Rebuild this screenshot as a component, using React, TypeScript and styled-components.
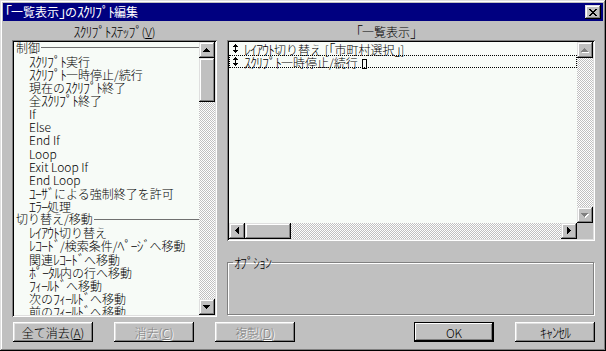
import React from 'react';
import styled, { createGlobalStyle, css } from 'styled-components';

const GlobalStyle = createGlobalStyle`
  html, body { margin: 0; padding: 0; background: #c0c0c0; }
  body {
    font-family: "Noto Sans CJK JP", "Noto Sans", sans-serif;
    font-size: 12px;
    font-weight: 300;
    color: #000;
  }
  * { box-sizing: border-box; }
`;

const raised = css`
  background: #c0c0c0;
  box-shadow: inset -1px -1px #000, inset 1px 1px #dfdfdf, inset -2px -2px #808080, inset 2px 2px #fff;
`;

const sunken = css`
  background: #f7fbf7;
  box-shadow: inset 1px 1px #808080, inset -1px -1px #fff, inset 2px 2px #000, inset -2px -2px #dfdfdf;
  padding: 2px;
`;

const checker = css`
  background-color: #fff;
  background-image: repeating-conic-gradient(#c0c0c0 0 25%, #fff 0 50%);
  background-size: 2px 2px;
`;

const HalfKanaRun = styled.span`
  font-size: 14px;
  letter-spacing: -1px;
  line-height: 1;
`;

/* Half-width katakana in Noto are drawn small; enlarge them to the bitmap look while keeping a 6px advance. */
function JText({ children }: { children: string }) {
  const parts = children.split(/([\uFF61-\uFF9F]+)/);
  return (
    <>
      {parts.map((p, i) =>
        /^[\uFF61-\uFF9F]+$/.test(p) ? <HalfKanaRun key={i}>{p}</HalfKanaRun> : <React.Fragment key={i}>{p}</React.Fragment>
      )}
    </>
  );
}

const Window = styled.div`
  width: 606px;
  height: 351px;
  padding: 3px;
  display: flex;
  flex-direction: column;
  background: #c0c0c0;
  box-shadow: inset -1px -1px #000, inset 1px 1px #dfdfdf, inset -2px -2px #808080, inset 2px 2px #fff;
`;

const TitleBar = styled.div`
  height: 18px;
  flex: none;
  display: flex;
  align-items: center;
  justify-content: space-between;
  background: #000080;
  color: #fff;
  padding: 0 2px;
  line-height: 18px;
`;

const TitleText = styled.span`
  white-space: nowrap;
  font-weight: 400;
`;

const CloseButton = styled.div`
  ${raised};
  width: 16px;
  height: 14px;
  display: flex;
  align-items: center;
  justify-content: center;
`;

const Body = styled.div`
  flex: 1;
  display: flex;
  flex-direction: column;
  padding: 3px 8px 6px 9px;
`;

const Main = styled.div`
  display: flex;
  gap: 10px;
`;

const LeftColumn = styled.div`
  width: 205px;
  display: flex;
  flex-direction: column;
`;

const RightColumn = styled.div`
  flex: 1;
  display: flex;
  flex-direction: column;
`;

const ColumnLabel = styled.div<{ $shift?: number }>`
  height: 16px;
  line-height: 16px;
  text-align: center;
  white-space: nowrap;
  padding-right: ${(p) => p.$shift ?? 0}px;
`;

const StepList = styled.div`
  ${sunken};
  height: 277px;
  display: flex;
`;

const StepItems = styled.div`
  flex: 1;
  overflow: hidden;
  margin-top: -1px;
`;

const StepRow = styled.div<{ $header?: boolean }>`
  height: 13.2px;
  line-height: 13.2px;
  display: flex;
  align-items: center;
  padding-left: ${(p) => (p.$header ? 2 : 15)}px;
  white-space: nowrap;
`;

const HeaderRule = styled.span`
  flex: 1;
  height: 1px;
  background: #707070;
  margin-left: 1px;
`;

const VScroll = styled.div`
  ${checker};
  width: 16px;
  flex: none;
  display: flex;
  flex-direction: column;
`;

const HScroll = styled.div`
  ${checker};
  height: 16px;
  display: flex;
`;

const ScrollButton = styled.div`
  ${raised};
  width: 16px;
  height: 16px;
  flex: none;
  display: flex;
  align-items: center;
  justify-content: center;
`;

const Thumb = styled.div<{ $size: number; $horizontal?: boolean }>`
  ${raised};
  flex: none;
  width: ${(p) => (p.$horizontal ? p.$size : 16)}px;
  height: ${(p) => (p.$horizontal ? 16 : p.$size)}px;
`;

const Corner = styled.div`
  background: #c0c0c0;
`;

const ScriptList = styled.div`
  ${sunken};
  height: 201px;
  display: grid;
  grid-template-columns: 1fr 16px;
  grid-template-rows: 1fr 16px;
`;

const ScriptItems = styled.div`
  overflow: hidden;
`;

const ScriptRow = styled.div<{ $focused?: boolean }>`
  height: 13px;
  line-height: 13px;
  display: flex;
  align-items: center;
  gap: 6px;
  padding-left: 4px;
  white-space: nowrap;
  ${(p) =>
    p.$focused &&
    css`
      outline: 1px dotted #000;
      outline-offset: -1px;
    `}
`;

const Tofu = styled.span`
  display: inline-block;
  width: 5px;
  height: 10px;
  border: 1px solid #000;
  margin-left: 4px;
  vertical-align: -1px;
`;

const OptionsGroup = styled.fieldset`
  margin: 14px 1px 0 0;
  padding: 0;
  height: 60px;
  min-width: 0;
  border: 1px solid #808080;
  box-shadow: inset 1px 1px #fff, 1px 1px #fff;
`;

const OptionsLegend = styled.legend`
  margin-left: 5px;
  padding: 0 1px;
  line-height: 14px;
  font-size: 12px;
`;

const ButtonRow = styled.div`
  display: flex;
  gap: 21px;
  margin-top: 5px;
  padding-left: 1px;
`;

const Spacer = styled.div`
  flex: 1;
`;

const Button = styled.button<{ $default?: boolean }>`
  width: 80px;
  height: 20px;
  padding: 0;
  font: inherit;
  color: #000;
  background: #c0c0c0;
  border: none;
  box-shadow: inset -1px -1px #000, inset 1px 1px #fff, inset -2px -2px #808080, inset 2px 2px #dfdfdf;
  ${(p) =>
    p.$default &&
    css`
      border: 1px solid #000;
      box-shadow: inset -1px -1px #000, inset 1px 1px #fff, inset -2px -2px #808080;
    `}
  &:disabled {
    color: #808080;
    text-shadow: 1px 1px #fff;
  }
`;

type Dir = 'up' | 'down' | 'left' | 'right';

function Arrow({ dir, disabled }: { dir: Dir; disabled?: boolean }) {
  const vertical = dir === 'up' || dir === 'down';
  const rects: { x: number; y: number; w: number; h: number }[] = [];
  for (let i = 0; i < 4; i++) {
    if (dir === 'up') rects.push({ x: 3 - i, y: i, w: 2 * i + 1, h: 1 });
    if (dir === 'down') rects.push({ x: i, y: i, w: 7 - 2 * i, h: 1 });
    if (dir === 'left') rects.push({ x: i, y: 3 - i, w: 1, h: 2 * i + 1 });
    if (dir === 'right') rects.push({ x: i, y: i, w: 1, h: 7 - 2 * i });
  }
  const w = vertical ? 7 : 4;
  const h = vertical ? 4 : 7;
  return (
    <svg width={w + 1} height={h + 1} viewBox={`0 0 ${w + 1} ${h + 1}`} shapeRendering="crispEdges">
      {disabled &&
        rects.map((r, i) => <rect key={`s${i}`} x={r.x + 1} y={r.y + 1} width={r.w} height={r.h} fill="#fff" />)}
      {rects.map((r, i) => (
        <rect key={i} x={r.x} y={r.y} width={r.w} height={r.h} fill={disabled ? '#808080' : '#000'} />
      ))}
    </svg>
  );
}

function CloseGlyph() {
  const rows = ['11000011', '01100110', '00111100', '00011000', '00111100', '01100110', '11000011'];
  return (
    <svg width="8" height="7" viewBox="0 0 8 7" shapeRendering="crispEdges">
      {rows.flatMap((r, y) =>
        r.split('').map((c, x) => (c === '1' ? <rect key={`${x}-${y}`} x={x} y={y} width="1" height="1" fill="#000" /> : null))
      )}
    </svg>
  );
}

function MoveIcon() {
  return (
    <svg width="5" height="9" viewBox="0 0 5 9" shapeRendering="crispEdges">
      <rect x="2" y="0" width="1" height="1" />
      <rect x="1" y="1" width="3" height="1" />
      <rect x="0" y="2" width="5" height="1" />
      <rect x="2" y="3" width="1" height="3" />
      <rect x="0" y="6" width="5" height="1" />
      <rect x="1" y="7" width="3" height="1" />
      <rect x="2" y="8" width="1" height="1" />
    </svg>
  );
}

type Step = { text: string; header?: boolean };

const steps: Step[] = [
  { text: '制御', header: true },
  { text: 'ｽｸﾘﾌﾟﾄ実行' },
  { text: 'ｽｸﾘﾌﾟﾄ一時停止/続行' },
  { text: '現在のｽｸﾘﾌﾟﾄ終了' },
  { text: '全ｽｸﾘﾌﾟﾄ終了' },
  { text: 'If' },
  { text: 'Else' },
  { text: 'End If' },
  { text: 'Loop' },
  { text: 'Exit Loop If' },
  { text: 'End Loop' },
  { text: 'ﾕｰｻﾞによる強制終了を許可' },
  { text: 'ｴﾗｰ処理' },
  { text: '切り替え/移動', header: true },
  { text: 'ﾚｲｱｳﾄ切り替え' },
  { text: 'ﾚｺｰﾄﾞ/検索条件/ﾍﾟｰｼﾞへ移動' },
  { text: '関連ﾚｺｰﾄﾞへ移動' },
  { text: 'ﾎﾟｰﾀﾙ内の行へ移動' },
  { text: 'ﾌｨｰﾙﾄﾞへ移動' },
  { text: '次のﾌｨｰﾙﾄﾞへ移動' },
  { text: '前のﾌｨｰﾙﾄﾞへ移動' },
];

export default function App() {
  return (
    <>
      <GlobalStyle />
      <Window>
        <TitleBar>
          <TitleText>
            <JText>｢一覧表示｣のｽｸﾘﾌﾟﾄ編集</JText>
          </TitleText>
          <CloseButton>
            <CloseGlyph />
          </CloseButton>
        </TitleBar>
        <Body>
          <Main>
            <LeftColumn>
              <ColumnLabel>
                <JText>ｽｸﾘﾌﾟﾄｽﾃｯﾌﾟ</JText>(<u>V</u>)
              </ColumnLabel>
              <StepList>
                <StepItems>
                  {steps.map((s, i) => (
                    <StepRow key={i} $header={s.header}>
                      <span>
                        <JText>{s.text}</JText>
                      </span>
                      {s.header && <HeaderRule />}
                    </StepRow>
                  ))}
                </StepItems>
                <VScroll>
                  <ScrollButton>
                    <Arrow dir="up" />
                  </ScrollButton>
                  <Thumb $size={44} />
                  <Spacer />
                  <ScrollButton>
                    <Arrow dir="down" />
                  </ScrollButton>
                </VScroll>
              </StepList>
            </LeftColumn>
            <RightColumn>
              <ColumnLabel $shift={50}>
                <JText>｢一覧表示｣</JText>
              </ColumnLabel>
              <ScriptList>
                <ScriptItems>
                  <ScriptRow>
                    <MoveIcon />
                    <span>
                      <JText>ﾚｲｱｳﾄ切り替え [｢市町村選択｣]</JText>
                    </span>
                  </ScriptRow>
                  <ScriptRow $focused>
                    <MoveIcon />
                    <span>
                      <JText>ｽｸﾘﾌﾟﾄ一時停止/続行</JText>
                      <Tofu />
                    </span>
                  </ScriptRow>
                </ScriptItems>
                <VScroll>
                  <ScrollButton>
                    <Arrow dir="up" disabled />
                  </ScrollButton>
                  <Spacer />
                  <ScrollButton>
                    <Arrow dir="down" disabled />
                  </ScrollButton>
                </VScroll>
                <HScroll>
                  <ScrollButton>
                    <Arrow dir="left" />
                  </ScrollButton>
                  <Thumb $size={46} $horizontal />
                  <Spacer />
                  <ScrollButton>
                    <Arrow dir="right" />
                  </ScrollButton>
                </HScroll>
                <Corner />
              </ScriptList>
              <OptionsGroup>
                <OptionsLegend>
                  <JText>ｵﾌﾟｼｮﾝ</JText>
                </OptionsLegend>
              </OptionsGroup>
            </RightColumn>
          </Main>
          <ButtonRow>
            <Button>
              全て消去(<u>A</u>)
            </Button>
            <Button disabled>
              消去(<u>C</u>)
            </Button>
            <Button disabled>
              複製(<u>D</u>)
            </Button>
            <Spacer />
            <Button $default>OK</Button>
            <Button>
              <JText>ｷｬﾝｾﾙ</JText>
            </Button>
          </ButtonRow>
        </Body>
      </Window>
    </>
  );
}
